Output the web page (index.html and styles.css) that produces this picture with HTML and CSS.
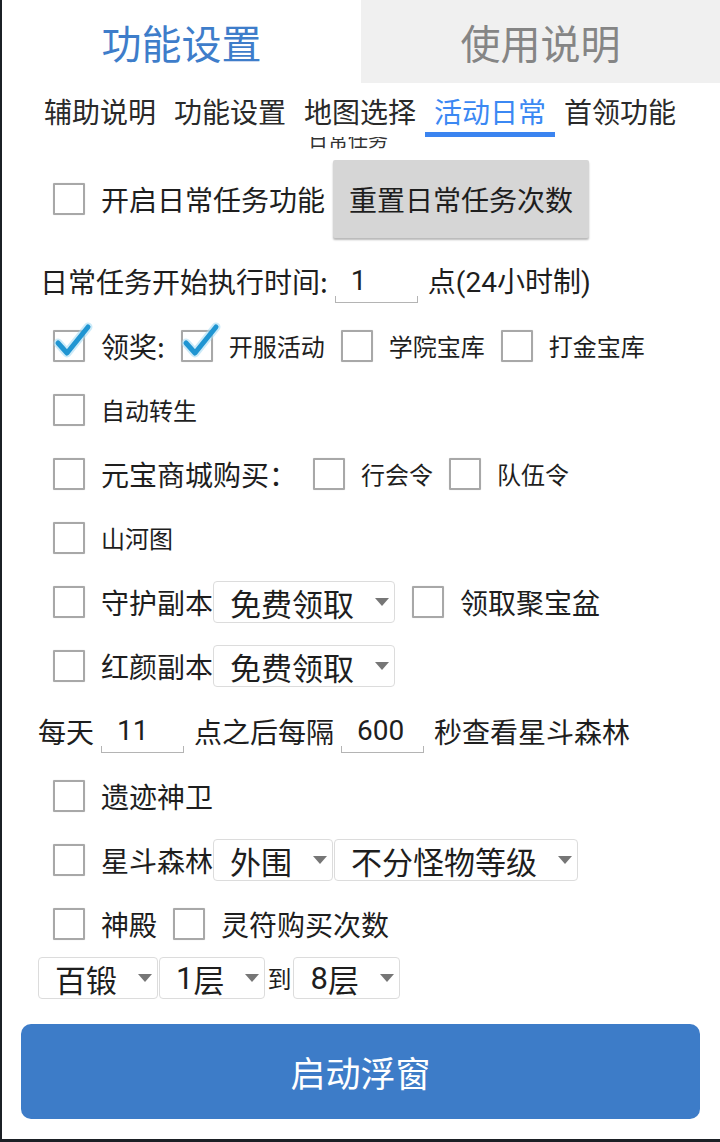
FILE: index.html
```html
<!DOCTYPE html>
<html lang="zh-CN">
<head>
    <meta charset="UTF-8">
    <meta name="viewport" content="width=device-width, initial-scale=1.0">
    <title>活动日常</title>
    <link rel="stylesheet" href="styles.css">
</head>
<body>
    <div class="app">
        <div class="tabs">
            <div class="tab active">功能设置</div>
            <div class="tab">使用说明</div>
        </div>

        <div class="subtabs">
            <div class="subtab">辅助说明</div>
            <div class="subtab">功能设置</div>
            <div class="subtab">地图选择</div>
            <div class="subtab active">活动日常</div>
            <div class="subtab">首领功能</div>
        </div>

        <div class="content">
            <div class="section-title"><span>日常任务</span></div>

            <div class="row row-top">
                <span class="cb"></span>
                <span class="label">开启日常任务功能</span>
                <div class="btn-gray">重置日常任务次数</div>
            </div>

            <div class="row row-tall pad-text">
                <span class="label">日常任务开始执行时间:</span>
                <div class="field">1</div>
                <span class="label">点<span class="num">(24</span>小时制<span class="num">)</span></span>
            </div>

            <div class="row">
                <span class="cb on"><svg viewBox="-2 -8 44 44"><path class="glow" d="M5 13 L14 23 L35 -3"/><path d="M5 13 L14 23 L35 -3"/></svg></span>
                <span class="label">领奖:</span>
                <span class="cb on"><svg viewBox="-2 -8 44 44"><path class="glow" d="M5 13 L14 23 L35 -3"/><path d="M5 13 L14 23 L35 -3"/></svg></span>
                <span class="label small">开服活动</span>
                <span class="cb"></span>
                <span class="label small">学院宝库</span>
                <span class="cb"></span>
                <span class="label small">打金宝库</span>
            </div>

            <div class="row">
                <span class="cb"></span>
                <span class="label small">自动转生</span>
            </div>

            <div class="row">
                <span class="cb"></span>
                <span class="label">元宝商城购买：</span>
                <span class="cb"></span>
                <span class="label small">行会令</span>
                <span class="cb"></span>
                <span class="label small">队伍令</span>
            </div>

            <div class="row">
                <span class="cb"></span>
                <span class="label small">山河图</span>
            </div>

            <div class="row">
                <span class="cb"></span>
                <span class="label">守护副本</span>
                <div class="spin">免费领取<i class="arrow"></i></div>
                <span class="cb"></span>
                <span class="label">领取聚宝盆</span>
            </div>

            <div class="row">
                <span class="cb"></span>
                <span class="label">红颜副本</span>
                <div class="spin">免费领取<i class="arrow"></i></div>
            </div>

            <div class="row row-tall pad-left">
                <span class="label">每天</span>
                <div class="field">11</div>
                <span class="label">点之后每隔</span>
                <div class="field">600</div>
                <span class="label">秒查看星斗森林</span>
            </div>

            <div class="row">
                <span class="cb"></span>
                <span class="label">遗迹神卫</span>
            </div>

            <div class="row">
                <span class="cb"></span>
                <span class="label">星斗森林</span>
                <div class="spin">外围<i class="arrow"></i></div>
                <div class="spin">不分怪物等级<i class="arrow"></i></div>
            </div>

            <div class="row">
                <span class="cb"></span>
                <span class="label">神殿</span>
                <span class="cb"></span>
                <span class="label">灵符购买次数</span>
            </div>

            <div class="row row-short pad-left">
                <div class="spin">百锻<i class="arrow"></i></div>
                <div class="spin"><span class="num">1</span>层<i class="arrow"></i></div>
                <span class="label small to">到</span>
                <div class="spin"><span class="num">8</span>层<i class="arrow"></i></div>
            </div>
        </div>

        <div class="start-btn">启动浮窗</div>
    </div>
</body>
</html>
```

FILE: styles.css
```css
body {
    margin: 0;
    padding: 0;
    background-color: #1b2025;
    font-family: "Noto Sans CJK SC", "Noto Sans", sans-serif;
    color: #1e1e1e;
}
.app {
    width: 718px;
    height: 1139px;
    margin-left: 2px;
    background-color: #ffffff;
    overflow: hidden;
}
.num {
    font-family: Roboto, sans-serif;
}
.tabs {
    display: flex;
    height: 83px;
}
.tab {
    flex: 1;
    display: flex;
    justify-content: center;
    align-items: center;
    font-size: 40px;
    color: #858585;
    background-color: #f0f0f0;
}
.tab.active {
    color: #3e7dca;
    background-color: #ffffff;
}
.subtabs {
    display: flex;
    justify-content: center;
    padding-right: 2px;
}
.subtab {
    width: 130px;
    text-align: center;
    font-size: 28px;
    line-height: 38px;
    padding: 9px 0 2px;
    border-bottom: 5px solid transparent;
    color: #2a2a2a;
}
.subtab.active {
    color: #3b88f3;
    border-bottom-color: #3b84f0;
}
.content {
    display: flex;
    flex-direction: column;
}
.section-title {
    height: 12px;
    overflow: hidden;
    padding-left: 306px;
}
.section-title span {
    display: block;
    font-size: 20px;
    line-height: 20px;
    margin-top: -8px;
    color: #333;
}
.row {
    display: flex;
    align-items: center;
    height: 64px;
    padding-left: 51px;
}
.row-top {
    height: 98px;
    margin-top: 1px;
}
.row-tall {
    height: 66px;
}
.row-short {
    height: 44px;
}
.pad-text {
    padding-left: 38px;
}
.pad-left {
    padding-left: 36px;
}
.label {
    font-size: 28px;
    line-height: 40px;
    white-space: nowrap;
}
.label.small {
    font-size: 24px;
}
.label.to {
    margin: 0 2px 0 1px;
}
.cb {
    position: relative;
    width: 32px;
    height: 32px;
    box-sizing: border-box;
    border: 2px solid #a8a8a8;
    border-radius: 1px;
    box-shadow: 0 0 1px rgba(0, 0, 0, 0.2);
    flex-shrink: 0;
    margin-right: 16px;
}
.label + .cb,
.spin + .cb {
    margin-left: 16px;
}
.cb svg {
    position: absolute;
    left: -4px;
    top: -10px;
    width: 44px;
    height: 44px;
    fill: none;
    overflow: visible;
}
.cb svg path {
    stroke: #1f95d2;
    stroke-width: 5;
    stroke-linejoin: round;
    stroke-linecap: round;
}
.cb svg path.glow {
    stroke: #a9dcf3;
    stroke-width: 9;
    opacity: 0.6;
}
.btn-gray {
    height: 78px;
    display: flex;
    align-items: center;
    padding: 0 16px;
    margin-left: 8px;
    font-size: 28px;
    color: #1e1e1e;
    background-color: #d6d6d6;
    border-radius: 2px;
    box-shadow: 0 2px 2px rgba(0, 0, 0, 0.28);
}
.field {
    position: relative;
    width: 83px;
    height: 42px;
    box-sizing: border-box;
    padding-left: 16px;
    margin: 0 10px 0 7px;
    font-family: Roboto, sans-serif;
    font-size: 28px;
    line-height: 42px;
}
.field::after {
    content: "";
    position: absolute;
    left: 0;
    right: 0;
    bottom: -1px;
    height: 6px;
    border: 1px solid #b4b4b4;
    border-top: none;
}
.spin {
    display: flex;
    align-items: center;
    height: 42px;
    box-sizing: border-box;
    padding: 0 5px 0 16px;
    border: 1px solid #dcdcdc;
    border-radius: 4px;
    font-size: 31px;
    white-space: nowrap;
    margin-right: 1px;
}
.arrow {
    width: 0;
    height: 0;
    margin-left: 21px;
    border-left: 7.5px solid transparent;
    border-right: 7.5px solid transparent;
    border-top: 8px solid #767676;
}
.start-btn {
    height: 95px;
    margin: 24px 20px 0 19px;
    display: flex;
    justify-content: center;
    align-items: center;
    background-color: #3d7cc8;
    color: #ffffff;
    font-size: 35px;
    border-radius: 10px;
}
```
